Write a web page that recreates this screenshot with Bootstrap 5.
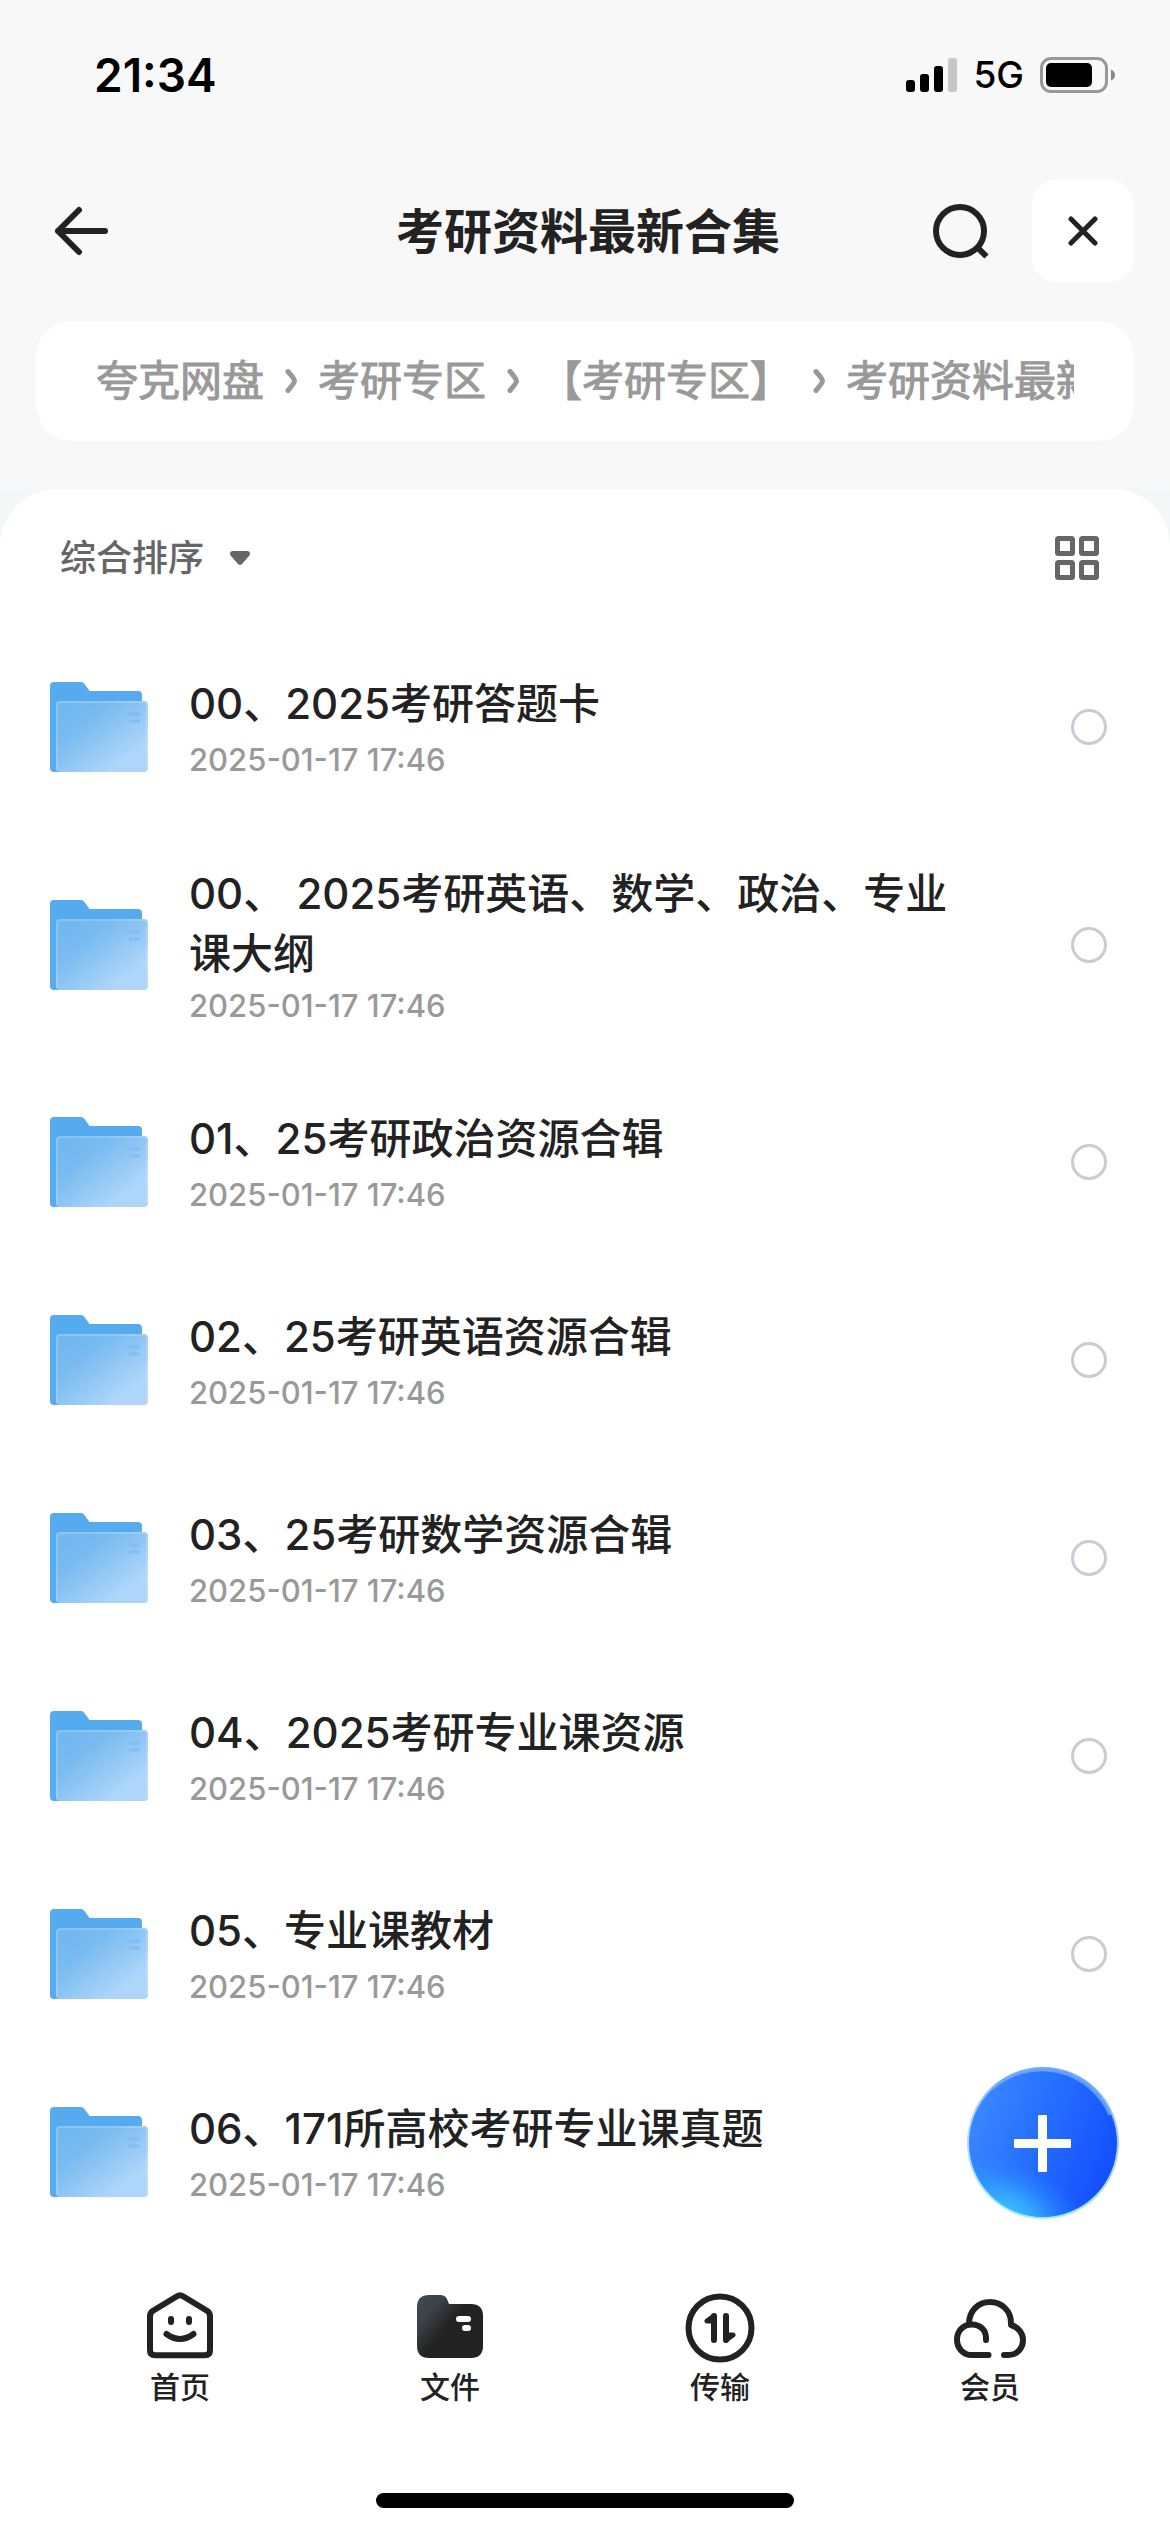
<!DOCTYPE html>
<html lang="zh-CN">
<head>
<meta charset="utf-8">
<meta name="viewport" content="width=device-width, initial-scale=1">
<title>考研资料最新合集</title>
<link href="https://cdn.jsdelivr.net/npm/bootstrap@5.3.0/dist/css/bootstrap.min.css" rel="stylesheet">
<style>
body { background: #f8f8f8; color: #222; font-family: Inter, "Noto Sans CJK SC", sans-serif; font-size: 42px; line-height: 60px; }
svg { display: block; flex: none; }
.status-bar { height: 150px; padding: 0 54px 0 94px; color: #000; }
.status-time { font-size: 46px; font-weight: 600; }
.status-net { font-size: 37px; font-weight: 500; }
.title-bar { height: 162px; padding: 0 36px 0 42px; }
.page-title { font-size: 48px; font-weight: 700; line-height: 60px; padding-top: 2px; }
.title-side { flex: 1 1 0; }
.icon-btn { background: none; border: 0; padding: 0; color: #222; }
.back-btn { margin-left: 12px; }
.search-btn { margin-right: 43px; }
.close-btn { width: 102px; height: 102px; border-radius: 24px; background: #fff; }
.path-card { height: 120px; margin: 9px 36px 48px; padding: 0 60px; border-radius: 36px; background: #fff; }
.path-list { list-style: none; color: #999; -webkit-text-stroke: 1px #999; }
.path-list a { color: inherit; text-decoration: none; }
.path-sep { width: 54px; }
.sheet-back { background: #f4f6f8; }
.sheet { background: #fff; border-radius: 57px 57px 0 0; }
.sort-bar { height: 139px; padding: 0 71px 1px 60px; color: #666; }
.sort-btn { color: #666; font-size: 36px; gap: 26px; font-weight: 500; }
.file-row { min-height: 198px; padding: 0 63px 0 50px; gap: 41px; }
.file-name { color: #222; text-decoration: none; white-space: pre-wrap; font-weight: 500; }
.file-date { color: #999; font-size: 31px; font-weight: 500; line-height: 40px; margin-top: 6px; }
.long-name { min-height: 237px; }
.long-name .file-date { margin-top: 2px; }
.file-text { margin-right: 50px; }
.pick { width: 36px; height: 36px; margin: 0; border: 3px solid #cbcbd3; flex: none; }
.tab-bar { min-height: 242px; padding: 36px 45px 0; background: #fff; }
.tab-link { color: #222; text-decoration: none; font-size: 30px; line-height: 40px; font-weight: 500; }
.home-bar { width: 418px; height: 15px; border-radius: 8px; background: #000; }
.home-wrap { background: #fff; padding-bottom: 24px; }
.add-btn { position: fixed; right: 51px; bottom: 313px; background: none; border: 0; padding: 0; border-radius: 50%; }
</style>
<script src="https://cdn.jsdelivr.net/npm/bootstrap@5.3.0/dist/js/bootstrap.bundle.min.js"></script>
</head>
<body>
<svg width="0" height="0" class="position-absolute" aria-hidden="true">
  <defs>
    <linearGradient id="folderFront" x1="0.1" y1="0.2" x2="0.9" y2="1">
      <stop offset="0" stop-color="#73b9ef"/><stop offset="0.2" stop-color="#78bbf0"/><stop offset="0.5" stop-color="#93c8f5"/><stop offset="0.8" stop-color="#aed6fa"/><stop offset="1" stop-color="#afd5f9"/>
    </linearGradient>
    <symbol id="folder" viewBox="0 0 98 90">
      <path fill="#55abee" d="M4 0h27q2 0 3.500 2l5 7H88q4 0 4 4v70H9v7H4q-4 0-4-4V4q0-4 4-4z"/>
      <rect x="6" y="19" width="92" height="71" rx="4" fill="url(#folderFront)"/>
      <path d="M7 88V23q0-3 3-3h84q3 0 3 3v63" fill="none" stroke="#fff" stroke-opacity=".18" stroke-width="2"/>
      <path d="M79 30h11v4H79zM79 37.500h11v3H79z" fill="#80bff4"/>
    </symbol>
    <symbol id="chev" viewBox="0 0 12 24"><path d="M3 2.500q6.500 7.500 6.500 9.500T3 21.500" fill="none" stroke="#999" stroke-width="5" stroke-linecap="round" stroke-linejoin="round"/></symbol>
  </defs>
</svg>

<div class="status-bar d-flex align-items-center justify-content-between">
  <span class="status-time">21:34</span>
  <div class="d-flex align-items-center">
    <svg width="51" height="34" viewBox="0 0 51 34" aria-label="信号"><rect y="22" width="9" height="12" rx="3"/><rect x="14" y="16" width="9" height="18" rx="3"/><rect x="28" y="8" width="9" height="26" rx="3"/><rect x="42" width="9" height="34" rx="3" fill="#c6c6c6"/></svg>
    <span class="status-net ms-3 me-3">5G</span>
    <svg width="76" height="36" viewBox="0 0 76 36" aria-label="电池"><rect x="1.500" y="1.500" width="65" height="33" rx="9.500" fill="none" stroke="#999" stroke-width="3"/><rect x="6" y="6" width="46" height="24" rx="5"/><path d="M71 12.500q4 2 4 5.500t-4 5.500z" fill="#888"/></svg>
  </div>
</div>

<header class="title-bar d-flex align-items-center">
  <div class="title-side d-flex align-items-center">
    <button type="button" class="icon-btn back-btn" aria-label="返回"><svg width="54" height="50" viewBox="0 0 54 50" fill="none" stroke="currentColor" stroke-width="6" stroke-linecap="round" stroke-linejoin="round"><path d="M25 4 4 25l21 21M4 25h47"/></svg></button>
  </div>
  <h1 class="page-title mb-0">考研资料最新合集</h1>
  <div class="title-side d-flex align-items-center justify-content-end">
    <button type="button" class="icon-btn search-btn" aria-label="搜索"><svg width="56" height="58" viewBox="0 0 56 58" fill="none" stroke="currentColor" stroke-width="6"><circle cx="27" cy="29" r="24"/><path d="M44 45l9.500 9.500"/></svg></button>
    <button type="button" class="icon-btn close-btn d-flex align-items-center justify-content-center" aria-label="关闭"><svg width="30" height="30" viewBox="0 0 30 30" stroke="currentColor" stroke-width="5" stroke-linecap="round"><path d="M3 3l24 24M27 3 3 27"/></svg></button>
  </div>
</header>

<nav class="path-card d-flex align-items-center" aria-label="路径">
  <ol class="path-list d-flex flex-nowrap text-nowrap overflow-hidden p-0 m-0 w-100">
    <li><a href="#">夸克网盘</a></li>
    <li class="path-sep d-flex align-items-center justify-content-center flex-shrink-0"><svg width="12" height="24"><use href="#chev"/></svg></li>
    <li><a href="#">考研专区</a></li>
    <li class="path-sep d-flex align-items-center justify-content-center flex-shrink-0"><svg width="12" height="24"><use href="#chev"/></svg></li>
    <li><a href="#">【考研专区】</a></li>
    <li class="path-sep d-flex align-items-center justify-content-center flex-shrink-0"><svg width="12" height="24"><use href="#chev"/></svg></li>
    <li><a href="#">考研资料最新合集</a></li>
  </ol>
</nav>

<div class="sheet-back">
<main class="sheet">
  <div class="sort-bar d-flex align-items-center justify-content-between">
    <button type="button" class="icon-btn sort-btn d-flex align-items-center">综合排序<svg width="20" height="14" viewBox="0 0 20 14" fill="currentColor"><path d="M3 0h14q3 0 3 3 0 1-1 2l-7 8q-2 2-4 0L1 5Q0 4 0 3q0-3 3-3z"/></svg></button>
    <button type="button" class="icon-btn" aria-label="网格视图"><svg width="44" height="44" viewBox="0 0 44 44" fill="none" stroke="#666" stroke-width="5"><rect x="2.500" y="2.500" width="15" height="15" rx="1"/><rect x="26.500" y="2.500" width="15" height="15" rx="1"/><rect x="2.500" y="26.500" width="15" height="15" rx="1"/><rect x="26.500" y="26.500" width="15" height="15" rx="1"/></svg></button>
  </div>

  <ul class="list-unstyled m-0">
    <li class="file-row d-flex align-items-center"><svg width="98" height="90"><use href="#folder"/></svg><div class="file-text flex-grow-1"><a href="#" class="file-name d-block" id="f1">00、2025考研答题卡</a><div class="file-date">2025-01-17 17:46</div></div><input type="checkbox" class="form-check-input pick rounded-circle" aria-labelledby="f1"></li>
    <li class="file-row long-name d-flex align-items-center"><svg width="98" height="90"><use href="#folder"/></svg><div class="file-text flex-grow-1"><a href="#" class="file-name d-block" id="f2">00、 2025考研英语、数学、政治、专业课大纲</a><div class="file-date">2025-01-17 17:46</div></div><input type="checkbox" class="form-check-input pick rounded-circle" aria-labelledby="f2"></li>
    <li class="file-row d-flex align-items-center"><svg width="98" height="90"><use href="#folder"/></svg><div class="file-text flex-grow-1"><a href="#" class="file-name d-block" id="f3">01、25考研政治资源合辑</a><div class="file-date">2025-01-17 17:46</div></div><input type="checkbox" class="form-check-input pick rounded-circle" aria-labelledby="f3"></li>
    <li class="file-row d-flex align-items-center"><svg width="98" height="90"><use href="#folder"/></svg><div class="file-text flex-grow-1"><a href="#" class="file-name d-block" id="f4">02、25考研英语资源合辑</a><div class="file-date">2025-01-17 17:46</div></div><input type="checkbox" class="form-check-input pick rounded-circle" aria-labelledby="f4"></li>
    <li class="file-row d-flex align-items-center"><svg width="98" height="90"><use href="#folder"/></svg><div class="file-text flex-grow-1"><a href="#" class="file-name d-block" id="f5">03、25考研数学资源合辑</a><div class="file-date">2025-01-17 17:46</div></div><input type="checkbox" class="form-check-input pick rounded-circle" aria-labelledby="f5"></li>
    <li class="file-row d-flex align-items-center"><svg width="98" height="90"><use href="#folder"/></svg><div class="file-text flex-grow-1"><a href="#" class="file-name d-block" id="f6">04、2025考研专业课资源</a><div class="file-date">2025-01-17 17:46</div></div><input type="checkbox" class="form-check-input pick rounded-circle" aria-labelledby="f6"></li>
    <li class="file-row d-flex align-items-center"><svg width="98" height="90"><use href="#folder"/></svg><div class="file-text flex-grow-1"><a href="#" class="file-name d-block" id="f7">05、专业课教材</a><div class="file-date">2025-01-17 17:46</div></div><input type="checkbox" class="form-check-input pick rounded-circle" aria-labelledby="f7"></li>
    <li class="file-row d-flex align-items-center"><svg width="98" height="90"><use href="#folder"/></svg><div class="file-text flex-grow-1"><a href="#" class="file-name d-block" id="f8">06、171所高校考研专业课真题</a><div class="file-date">2025-01-17 17:46</div></div></li>
  </ul>
</main>
</div>

<nav class="tab-bar d-flex align-items-start" aria-label="主导航">
  <a href="#" class="tab-link flex-fill w-25 d-flex flex-column align-items-center">
    <svg width="72" height="80" viewBox="0 0 72 80" fill="none" stroke="#222" stroke-width="6" stroke-linecap="round" stroke-linejoin="round"><path d="M33 9.200q3-2 6 0l24 14.500q3 2 3 5.500v34q0 5-5 5H11q-5 0-5-5v-34q0-3.500 3-5.500z"/><path d="M27 32v3M45 32v3M22.500 47q13.500 10 27 0"/></svg>首页</a>
  <a href="#" class="tab-link flex-fill w-25 d-flex flex-column align-items-center" aria-current="page">
    <svg width="72" height="80" viewBox="0 0 72 80"><defs><linearGradient id="tabFolder" x1="0.05" y1="0.1" x2="0.55" y2="0.5"><stop offset="0" stop-color="#404850"/><stop offset="0.35" stop-color="#3b4249"/><stop offset="0.9" stop-color="#222"/></linearGradient></defs><path fill="url(#tabFolder)" d="M15 8h11q5 0 7 4l2 5h22q12 0 12 12v30q0 12-12 12H15Q3 71 3 59V20Q3 8 15 8z"/><rect x="42" y="29" width="15" height="6" rx="3" fill="#fff"/><rect x="48" y="38" width="9" height="6" rx="3" fill="#fff"/></svg>文件</a>
  <a href="#" class="tab-link flex-fill w-25 d-flex flex-column align-items-center">
    <svg width="72" height="80" viewBox="0 0 72 80" fill="none" stroke="#222" stroke-width="6" stroke-linecap="round" stroke-linejoin="round"><circle cx="36" cy="41" r="31.500"/><path d="M30 29v24M42 29v24"/><path d="M30 29l-7 5h7zM42 53l7-5h-7z" fill="#222" stroke-width="5"/></svg>传输</a>
  <a href="#" class="tab-link flex-fill w-25 d-flex flex-column align-items-center">
    <svg width="76" height="80" viewBox="0 0 76 80" fill="none" stroke="#222" stroke-width="6" stroke-linecap="round" stroke-linejoin="round"><path d="M34 53v-2C34 43 28 37.500 20 37.500 11 37.500 5 44 5 52.500S11 68 20 68H36.500"/><path d="M17 37C17 24 26 15 38 15S59 24 59 36v2C66 40 71 46 71 53 71 61 65 68 57 68H52"/></svg>会员</a>
</nav>
<div class="home-wrap d-flex justify-content-center"><div class="home-bar"></div></div>

<button type="button" class="add-btn" aria-label="添加">
  <svg width="152" height="152" viewBox="0 0 152 152">
    <defs>
      <linearGradient id="addBase" x1="0.05" y1="0.3" x2="0.95" y2="0.65"><stop offset="0" stop-color="#3986fe"/><stop offset="0.5" stop-color="#246cff"/><stop offset="1" stop-color="#1450ff"/></linearGradient>
      <radialGradient id="addGlow" cx="0" cy="0" r="1" gradientTransform="translate(.27 .98) rotate(25) scale(.62 .36)"><stop offset="0" stop-color="#3cc4ff"/><stop offset="0.35" stop-color="#36b0ff" stop-opacity=".8"/><stop offset="0.7" stop-color="#3096ff" stop-opacity=".35"/><stop offset="1" stop-color="#2e8aff" stop-opacity="0"/></radialGradient>
      <linearGradient id="addRim" x1="0.6" y1="0" x2="0.4" y2="1"><stop offset="0" stop-color="#69a8f8"/><stop offset="0.5" stop-color="#7fc0ff" stop-opacity=".6"/><stop offset="1" stop-color="#94f0ff"/></linearGradient>
    </defs>
    <circle cx="76" cy="76" r="76" fill="url(#addRim)"/>
    <circle cx="76" cy="76" r="74" fill="url(#addBase)"/>
    <circle cx="76" cy="76" r="74" fill="url(#addGlow)"/>
    <path d="M25 22a74 74 0 0 1 118 26" fill="none" stroke="#72adfa" stroke-width="3" stroke-opacity=".8"/>
    <rect x="47" y="72" width="57" height="9" rx="1" fill="#fff"/><rect x="71" y="48" width="9" height="57" rx="1" fill="#fff"/>
  </svg>
</button>
</body>
</html>
